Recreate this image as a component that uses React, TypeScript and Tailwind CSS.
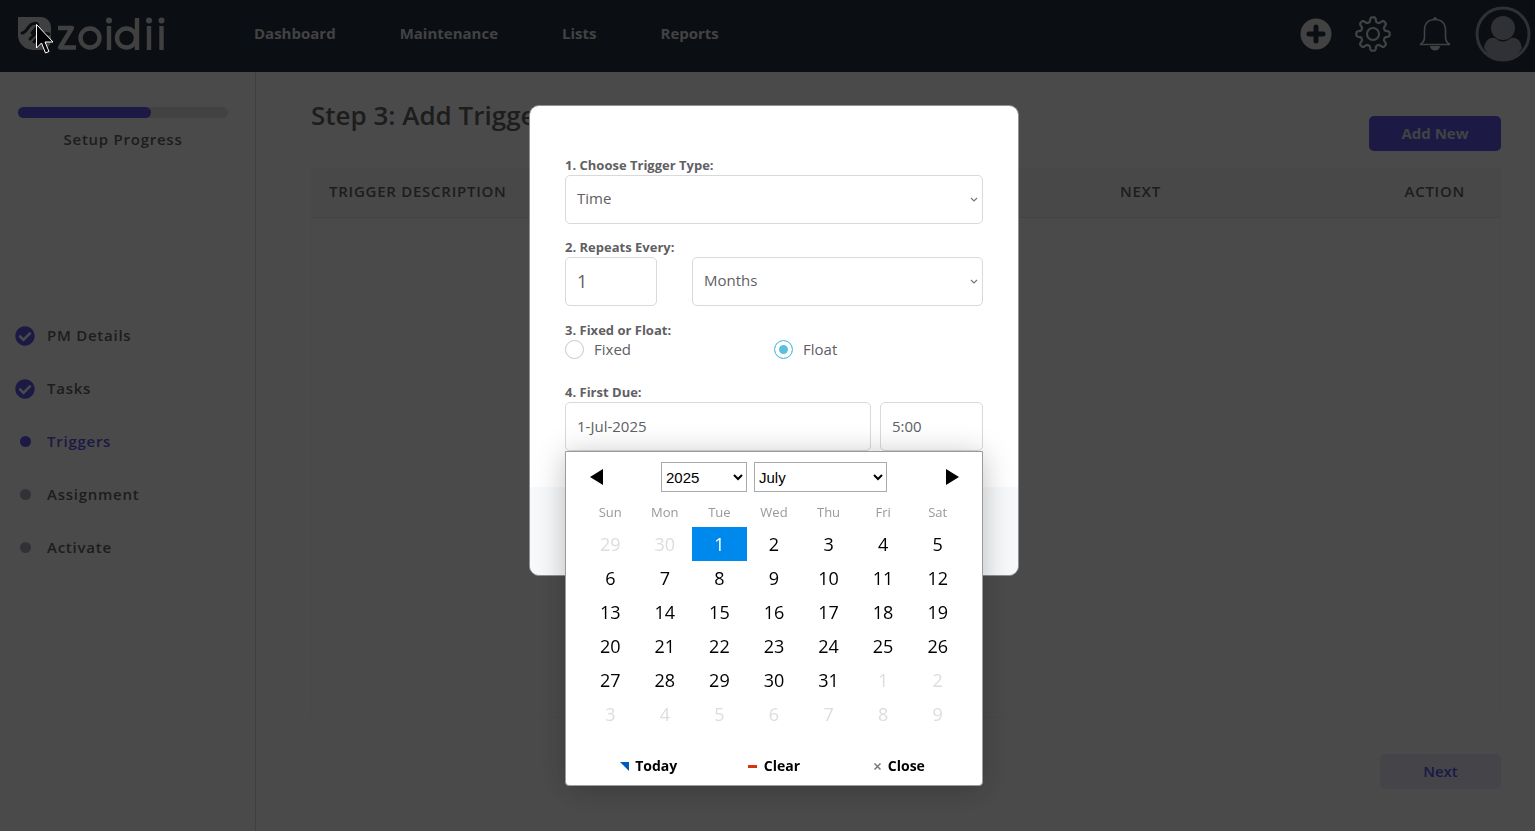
import { useState } from 'react';
import { FaCheckCircle } from 'react-icons/fa';

const navLinks = ['Dashboard', 'Maintenance', 'Lists', 'Reports'];

type StepState = 'done' | 'current' | 'pending';

const steps: { name: string; state: StepState }[] = [
  { name: 'PM Details', state: 'done' },
  { name: 'Tasks', state: 'done' },
  { name: 'Triggers', state: 'current' },
  { name: 'Assignment', state: 'pending' },
  { name: 'Activate', state: 'pending' },
];

const weekDays = ['Sun', 'Mon', 'Tue', 'Wed', 'Thu', 'Fri', 'Sat'];

const months = [
  'January',
  'February',
  'March',
  'April',
  'May',
  'June',
  'July',
  'August',
  'September',
  'October',
  'November',
  'December',
];

/* 29 June is the first cell of the July sheet */
const cells = Array.from({ length: 42 }, (_, i) => {
  if (i < 2) return { day: 29 + i, outside: true };
  if (i > 32) return { day: i - 32, outside: true };
  return { day: i - 1, outside: false };
});

const weeks = Array.from({ length: 6 }, (_, i) => cells.slice(i * 7, i * 7 + 7));

/* Eight rounded teeth round a circle */
const gearPoints = Array.from({ length: 160 }, (_, i) => {
  const angle = (i / 160) * Math.PI * 2;
  const radius = 14.5 + 2.3 * Math.tanh(2.2 * Math.cos(8 * angle));
  return `${(18 + radius * Math.cos(angle)).toFixed(2)},${(18 + radius * Math.sin(angle)).toFixed(2)}`;
}).join(' ');

const Logo = () => (
  <a href="#" aria-label="zoidii" className="shrink-0 text-[#d8d8d8]">
    <svg viewBox="0 0 148 33" className="h-[33px] w-[148px]" fill="none">
      <path d="M0 0H23a10 10 0 0 1 10 10V23a10 10 0 0 1-10 10H15A15 15 0 0 1 0 18Z" fill="currentColor" />
      <path
        d="M4 16C9 16 10 7 16 6.500C19 6 21 7 19 10L14 16M12 22l9-9M16 25l8-9 7 1"
        stroke="#26303e"
        strokeWidth="3"
        strokeLinecap="round"
      />
      <g stroke="currentColor" strokeWidth="4.400">
        <path d="M40 11H54L42 30.500H58" strokeLinejoin="round" />
        <circle cx="72" cy="21" r="9.500" />
        <path d="M91 9V33M119 1V33M131 9V33M143.500 9V33" />
        <circle cx="108.500" cy="21" r="9.500" />
      </g>
      <g fill="currentColor">
        <circle cx="91" cy="3.500" r="3" />
        <circle cx="131" cy="3.500" r="3" />
        <circle cx="143.500" cy="3.500" r="3" />
      </g>
    </svg>
  </a>
);

const PlusIcon = () => (
  <svg viewBox="0 0 32 32" className="size-8">
    <circle cx="16" cy="16" r="15.500" fill="#dcdde0" />
    <path d="M16 9V23M9 16H23" stroke="#26303e" strokeWidth="5" strokeLinecap="round" />
  </svg>
);

const GearIcon = () => (
  <svg viewBox="0 0 36 36" className="size-9" fill="none" stroke="#dcdde0" strokeWidth="2.200">
    <circle cx="18" cy="18" r="6" />
    <polygon points={gearPoints} strokeLinejoin="round" />
  </svg>
);

const BellIcon = () => (
  <svg viewBox="0 0 34 36" className="h-9 w-[34px]" fill="none">
    <path
      d="M6.500 21V14C6.500 7 11 3.500 17 3.500S27.500 7 27.500 14V21C27.500 25 29 27 32 28.500H2C5 27 6.500 25 6.500 21Z"
      stroke="#dcdde0"
      strokeWidth="1.600"
    />
    <path d="M15 3.500Q15 1 17 1T19 3.500ZM12 30H22A5 4.500 0 0 1 12 30Z" fill="#dcdde0" />
  </svg>
);

const Avatar = () => (
  <svg viewBox="0 0 56 56" className="size-14" fill="none">
    <circle cx="28" cy="28" r="26" stroke="#9ea3ad" strokeWidth="3" />
    <path d="M9 42C10 35 14 31 20 32Q28 39 36 32C42 31 46 35 47 42Q40 54 28 54T9 42Z" fill="#9ea3ad" />
    <circle cx="28" cy="22" r="12" fill="#9ea3ad" />
  </svg>
);

const StepMark = ({ state }: { state: StepState }) => {
  if (state === 'done') return <FaCheckCircle className="size-5 text-[#5e55e8]" />;
  if (state === 'current') return <span className="size-[11px] rounded-full bg-[#5e55e8]" />;
  return <span className="size-[11px] rounded-full bg-[#a6a9b3]" />;
};

const Chevron = () => (
  <svg
    viewBox="0 0 8 6"
    className="pointer-events-none absolute top-1/2 right-[5px] h-[6px] w-2 -translate-y-1/2"
    fill="none"
  >
    <path d="M1 1l3 3 3-3" stroke="#777" strokeWidth="1.200" />
  </svg>
);

const fieldClass =
  'h-[49px] w-full appearance-none rounded-[5px] border border-[#d9d9dc] bg-white px-[11px] pb-[2px] text-[#5f6063] outline-none';
const labelClass = 'block text-[13px] leading-[19px] font-bold text-[#5f6063]';

const Calendar = () => {
  const [selected, setSelected] = useState(1);

  return (
    <div className="absolute top-full right-0 left-0 rounded-b-[4px] border border-[#9b9b9b] bg-white px-[17px] pb-[9px] text-black shadow-[0_4px_30px_rgba(0,0,0,0.25)]">
      <div className="flex h-[50px] items-center justify-between px-[5px]">
        <button aria-label="Previous month" className="grid size-4 place-items-center">
          <svg viewBox="0 0 13 16" className="h-4 w-[13px]">
            <path d="M13 0V16L0 8Z" />
          </svg>
        </button>
        <div className="flex gap-[7px] font-['Liberation_Sans',sans-serif] text-[15px]">
          <select aria-label="Year" defaultValue="2025" className="h-[30px] w-[86px] border border-[#aaa] bg-white">
            <option>2024</option>
            <option>2025</option>
            <option>2026</option>
          </select>
          <select aria-label="Month" defaultValue="July" className="h-[30px] w-[133px] border border-[#aaa] bg-white">
            {months.map((month) => (
              <option key={month}>{month}</option>
            ))}
          </select>
        </div>
        <button aria-label="Next month" className="grid size-4 place-items-center">
          <svg viewBox="0 0 13 16" className="h-4 w-[13px]">
            <path d="M0 0V16L13 8Z" />
          </svg>
        </button>
      </div>
      <table className="w-full table-fixed border-collapse text-center text-lg">
        <thead>
          <tr className="h-[25px] text-[13px] leading-5 text-[#999]">
            {weekDays.map((day) => (
              <th key={day} className="p-0 pb-[5px] font-normal">
                {day}
              </th>
            ))}
          </tr>
        </thead>
        <tbody>
          {weeks.map((week, i) => (
            <tr key={i}>
              {week.map(({ day, outside }) => (
                <td key={day} className="p-0">
                  <button
                    disabled={outside}
                    onClick={() => setSelected(day)}
                    className={
                      outside
                        ? 'block h-[34px] w-full text-[#ddd]'
                        : day === selected
                          ? 'block h-[34px] w-full bg-[#0089ec] text-white'
                          : 'block h-[34px] w-full'
                    }
                  >
                    {day}
                  </button>
                </td>
              ))}
            </tr>
          ))}
        </tbody>
      </table>
      <div className="mt-[25px] grid grid-cols-3 px-[3px] text-sm font-bold">
        <button className="flex items-center justify-center gap-[6px]">
          <svg viewBox="0 0 9 9" className="size-[9px]">
            <path d="M0 0H9V9Z" fill="#0059bc" />
          </svg>
          Today
        </button>
        <button className="flex items-center justify-center gap-[7px]">
          <span className="h-[3px] w-[9px] bg-[#d9320f]" />
          Clear
        </button>
        <button className="flex items-center justify-center gap-[7px]">
          <svg viewBox="0 0 7 7" className="size-[7px]" stroke="#777" strokeWidth="1.500">
            <path d="M.5.5l6 6M6.500.5l-6 6" />
          </svg>
          Close
        </button>
      </div>
    </div>
  );
};

const TriggerDialog = () => (
  <div
    role="dialog"
    aria-label="Add trigger"
    className="w-[490px] rounded-[10px] border border-[#8d9096] bg-white"
  >
    <form className="px-[35px] pt-[50px] pb-9 text-[15px] text-[#5f6063]">
      <label htmlFor="type" className={labelClass}>
        1. Choose Trigger Type:
      </label>
      <div className="relative">
        <select id="type" className={fieldClass}>
          <option>Time</option>
        </select>
        <Chevron />
      </div>

      <label htmlFor="every" className={`${labelClass} mt-[14px]`}>
        2. Repeats Every:
      </label>
      <div className="flex gap-[35px]">
        <input id="every" defaultValue="1" className={`${fieldClass} max-w-[92px] text-lg`} />
        <div className="relative flex-1">
          <select aria-label="Period" className={fieldClass}>
            <option>Months</option>
          </select>
          <Chevron />
        </div>
      </div>

      <fieldset className="mt-[15px]">
        <legend className={labelClass}>3. Fixed or Float:</legend>
        <div className="grid grid-cols-2">
          {['Fixed', 'Float'].map((mode) => (
            <label key={mode} className="flex h-[18px] items-center gap-[10px]">
              <input
                type="radio"
                name="mode"
                defaultChecked={mode === 'Float'}
                className="size-[19px] appearance-none rounded-full border border-[#c8c8cb] bg-white checked:border-[#5bc0de] checked:bg-[#5bc0de] checked:shadow-[inset_0_0_0_4px_white]"
              />
              {mode}
            </label>
          ))}
        </div>
      </fieldset>

      <div className="relative mt-[25px]">
        <label htmlFor="due" className={labelClass}>
          4. First Due:
        </label>
        <div className="flex gap-[9px]">
          <input id="due" defaultValue="1-Jul-2025" className={`${fieldClass} flex-1`} />
          <input aria-label="Time due" defaultValue="5:00" className={`${fieldClass} max-w-[103px]`} />
        </div>
        <Calendar />
      </div>
    </form>
    <div className="h-[88px] rounded-b-[10px] bg-[#f8f9fb]" />
  </div>
);

const App = () => (
  <div className="flex min-h-screen flex-col bg-[#f9f9f9] font-['Open_Sans',sans-serif] text-[15px] text-[#626365]">
    <header className="flex h-[72px] items-center bg-[#26303e] pb-[5px] pl-[18px]">
      <Logo />
      <nav className="ml-[88px] flex flex-1 gap-16 font-bold text-[#dcdde0]">
        {navLinks.map((link) => (
          <a key={link} href="#">
            {link}
          </a>
        ))}
      </nav>
      <div className="flex items-center">
        <button aria-label="Add" className="mr-[23px]">
          <PlusIcon />
        </button>
        <button aria-label="Settings" className="mr-[27px]">
          <GearIcon />
        </button>
        <button aria-label="Notifications" className="mr-[23px]">
          <BellIcon />
        </button>
        <button aria-label="Account" className="mr-1">
          <Avatar />
        </button>
      </div>
    </header>

    <div className="flex flex-1">
      <aside className="w-64 shrink-0 border-r border-[#d2d2d5] font-semibold tracking-wider">
        <div className="mr-[27px] ml-[18px] pt-[35px] text-center">
          <div className="h-[11px] rounded-full bg-[#dcdcdc]">
            <div className="h-full w-[133px] rounded-full bg-[#5e55e8]" />
          </div>
          <p className="mt-[11px] leading-5">Setup Progress</p>
        </div>
        <ol className="mt-[160px] ml-[15px]">
          {steps.map(({ name, state }) => (
            <li key={name} className="flex h-[53px] items-center gap-3">
              <span className="flex w-5 justify-center">
                <StepMark state={state} />
              </span>
              <span className={state === 'current' ? 'text-[#5e55e8]' : ''}>{name}</span>
            </li>
          ))}
        </ol>
      </aside>

      <main className="flex flex-1 flex-col pr-[34px] pb-[42px] pl-[55px]">
        <div className="flex justify-between">
          <h1 className="mt-[25px] text-[26px] leading-9 font-semibold">Step 3: Add Triggers</h1>
          <button className="mt-11 h-[35px] w-[132px] rounded-[5px] bg-[#5e55e8] font-bold text-[#dedee2]">
            Add New
          </button>
        </div>
        <div className="mt-[17px] flex-1 border border-[#f1f1f3]">
          <table className="w-full table-fixed border-b border-[#e0e0e4] bg-[#f1f1f5] tracking-wider">
            <thead>
              <tr className="h-12 text-left">
                <th className="pb-1 pl-[17px] font-semibold">TRIGGER DESCRIPTION</th>
                <th className="w-[240px] pb-1 font-semibold">NEXT</th>
                <th className="w-[140px] pr-[35px] pb-1 text-right font-semibold">ACTION</th>
              </tr>
            </thead>
          </table>
        </div>
        <button className="mt-9 h-[35px] w-[121px] self-end rounded-[5px] bg-[#e6e7f4] font-semibold text-[#5e55e8]">
          Next
        </button>
      </main>
    </div>

    <div className="fixed inset-0 flex items-start justify-center bg-black/70 pt-[105px] pl-[13px]">
      <TriggerDialog />
    </div>

    {/* pointer */}
    <svg viewBox="0 0 20 32" className="fixed top-6 left-9 h-8 w-5">
      <path d="M.5.5V24l5-5 4 10 3.500-1.500L9 18H17Z" fill="#000" stroke="#fff" />
    </svg>
  </div>
);

export default App;
